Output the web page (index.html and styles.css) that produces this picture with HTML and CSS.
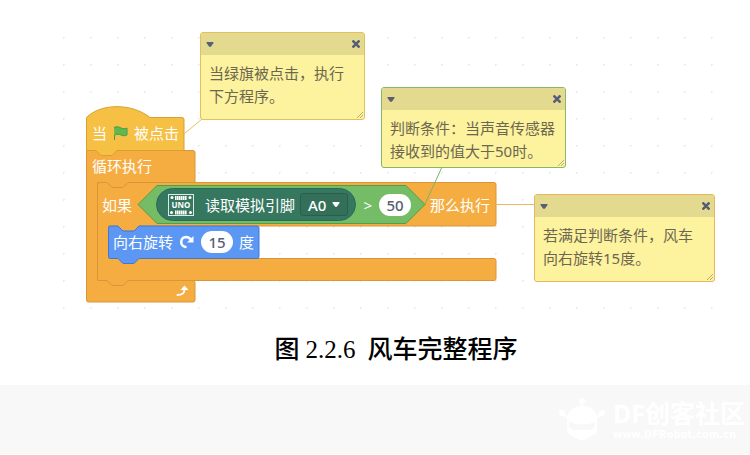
FILE: index.html
```html
<!DOCTYPE html>
<html lang="zh-CN">
<head>
    <meta charset="UTF-8">
    <meta name="viewport" content="width=device-width, initial-scale=1.0">
    <title>风车完整程序</title>
    <link rel="stylesheet" href="styles.css">
</head>
<body>
    <figure class="figure">
        <div class="workspace">
            <!-- Blocs -->
            <div class="script">
                <svg class="shapes" width="412" height="200" viewBox="0 0 412 200" aria-hidden="true">
                    <path fill="#f5ad42" stroke="#d8953a" d="M.5 47.500H107q2 0 2 2V79.500H42l-5 5H26l-5-5H11.500V177.500H107q2 0 2 2V197q0 2-2 2H2.500q-2 0-2-2z"/>
                    <path fill="#f5c043" stroke="#d6a12c" d="M.5 14.500C15 0 46 0 64 14.500H96q2 0 2 2V47.500H31l-5 5H15l-5-5H.5z"/>
                    <path fill="#f5ad42" stroke="#d8953a" d="M11.500 81.500q0-2 2-2H21l5 5H37l5-5H408q2 0 2 2V121q0 2-2 2H53l-5 5H37l-5-5H22.500V155.500H408q2 0 2 2V175.500q0 2-2 2H42l-5 5H26l-5-5H13.500q-2 0-2-2z"/>
                    <path fill="#74bd66" stroke="#549e47" d="M71 82.500H320L339 101.500L320 120.500H71L52 101.500z"/>
                    <path fill="#5b97f3" stroke="#4179d2" d="M22.500 125q0-2 2-2H32l5 5H48l5-5H171q2 0 2 2V153.500q0 2-2 2H53l-5 5H37l-5-5H24.500q-2 0-2-2z"/>
                </svg>
                <div class="row row-hat">
                    <span>当</span>
                    <svg width="15" height="14" viewBox="0 0 15 14" aria-hidden="true">
                        <path fill="#5fb94f" stroke="#4b9a4a" d="M1 1.500C4 0 6 1 8 2s4 1 6 0V9c-2 1-4 1-6 0S4 8 1.500 9V14"/>
                    </svg>
                    <span>被点击</span>
                </div>
                <div class="row row-loop"><span>循环执行</span></div>
                <div class="row row-if">
                    <span>如果</span>
                    <div class="reporter">
                        <svg width="28" height="26" viewBox="0 0 28 26" aria-hidden="true">
                            <rect x="1.500" y="2.500" width="25" height="21" fill="none" stroke="#dcebe6"/>
                            <path stroke="#fff" stroke-width="4" stroke-dasharray="1.600 .4" d="M8 6H20M8 20.500H20"/>
                            <g fill="#fff">
                                <circle cx="5" cy="5.500" r="1.500"/>
                                <circle cx="23" cy="5.500" r="1.500"/>
                                <circle cx="4.500" cy="20.500" r="1.500"/>
                                <circle cx="23.500" cy="20.500" r="1.500"/>
                            </g>
                            <text class="board-name" x="14" y="16" text-anchor="middle">UNO</text>
                        </svg>
                        <span>读取模拟引脚</span>
                        <button class="pin" type="button">A0
                            <svg width="8" height="5" viewBox="0 0 8 5" aria-hidden="true"><path fill="#fff" d="M1 0H7q1 0 .5 1L5 4.500q-1 .8-2 0L.5 1Q0 0 1 0z"/></svg>
                        </button>
                    </div>
                    <span class="operator">&gt;</span>
                    <input class="value" type="text" value="50" aria-label="阈值">
                    <span class="then">那么执行</span>
                </div>
                <div class="row row-turn">
                    <span>向右旋转</span>
                    <svg width="16" height="16" viewBox="0 0 16 16" aria-hidden="true">
                        <path fill="none" stroke="#fff" stroke-width="2.500" stroke-linecap="round" d="M6.500 13C.5 11.500 1 3.500 7 3q2.500 0 4.500 2"/>
                        <path fill="#fff" d="M14.500 2V8.500H8z"/>
                    </svg>
                    <input class="value" type="text" value="15" aria-label="角度">
                    <span>度</span>
                </div>
                <div class="row row-end">
                    <svg width="13" height="12" viewBox="0 0 13 12" aria-hidden="true">
                        <path fill="none" stroke="#fff" stroke-width="2" stroke-linecap="round" d="M1.500 10C6 10 8.500 9 8.500 4"/>
                        <path fill="#fff" d="M4.500 5L8.500 .5L12.500 5z"/>
                    </svg>
                </div>
            </div>

            <!-- Liens entre blocs et commentaires -->
            <svg class="links" width="750" height="320" viewBox="0 0 750 320" fill="none" aria-hidden="true">
                <path stroke="#e3c468" d="M184 134L202 119"/>
                <path stroke="#74b566" d="M425 204L442 167"/>
                <path stroke="#eab765" d="M496 204.500H535"/>
            </svg>

            <!-- Commentaires -->
            <section class="note note-start">
                <header class="note-bar">
                    <button class="note-btn" type="button" aria-label="折叠"><svg width="8" height="5" viewBox="0 0 8 5"><path fill="#575e75" d="M1 0H7q1 0 .5 1L5 4.500q-1 .8-2 0L.5 1Q0 0 1 0z"/></svg></button>
                    <button class="note-btn" type="button" aria-label="关闭"><svg width="8" height="8" viewBox="0 0 8 8"><path stroke="#575e75" stroke-width="2.500" d="M.5 .5L7.500 7.500M7.500 .5L.5 7.500"/></svg></button>
                </header>
                <p class="note-text">当绿旗被点击，执行<br>下方程序。</p>
                <svg class="grip" width="6" height="6" viewBox="0 0 6 6"><path stroke="#b5ae78" d="M0 6L6 0M3 6L6 3"/></svg>
            </section>
            <section class="note note-condition">
                <header class="note-bar">
                    <button class="note-btn" type="button" aria-label="折叠"><svg width="8" height="5" viewBox="0 0 8 5"><path fill="#575e75" d="M1 0H7q1 0 .5 1L5 4.500q-1 .8-2 0L.5 1Q0 0 1 0z"/></svg></button>
                    <button class="note-btn" type="button" aria-label="关闭"><svg width="8" height="8" viewBox="0 0 8 8"><path stroke="#575e75" stroke-width="2.500" d="M.5 .5L7.500 7.500M7.500 .5L.5 7.500"/></svg></button>
                </header>
                <p class="note-text">判断条件：当声音传感器<br>接收到的值大于50时。</p>
                <svg class="grip" width="6" height="6" viewBox="0 0 6 6"><path stroke="#b5ae78" d="M0 6L6 0M3 6L6 3"/></svg>
            </section>
            <section class="note note-turn">
                <header class="note-bar">
                    <button class="note-btn" type="button" aria-label="折叠"><svg width="8" height="5" viewBox="0 0 8 5"><path fill="#575e75" d="M1 0H7q1 0 .5 1L5 4.500q-1 .8-2 0L.5 1Q0 0 1 0z"/></svg></button>
                    <button class="note-btn" type="button" aria-label="关闭"><svg width="8" height="8" viewBox="0 0 8 8"><path stroke="#575e75" stroke-width="2.500" d="M.5 .5L7.500 7.500M7.500 .5L.5 7.500"/></svg></button>
                </header>
                <p class="note-text">若满足判断条件，风车<br>向右旋转15度。</p>
                <svg class="grip" width="6" height="6" viewBox="0 0 6 6"><path stroke="#b5ae78" d="M0 6L6 0M3 6L6 3"/></svg>
            </section>
        </div>
        <figcaption class="caption"><span>图</span><span class="caption-number">2.2.6</span><span>风车完整程序</span></figcaption>
    </figure>

    <footer class="footer">
        <svg width="46" height="44" viewBox="0 0 46 44" aria-hidden="true">
            <path stroke="#fff" stroke-width="2" d="M23 3V12M3 16L11 20M43 16L35 20"/>
            <circle cx="23" cy="3" r="3" fill="#fff"/>
            <circle cx="3" cy="15" r="3" fill="#fff"/>
            <circle cx="43" cy="15" r="3" fill="#fff"/>
            <path fill="#fff" d="M23 8C32 8 37 13 38 20V35L23 43L8 35V20C9 13 14 8 23 8z"/>
            <path fill="#f8f8f8" d="M10 24Q23 29 36 24V29L32 32H14L10 29z"/>
        </svg>
        <div class="brand">
            <span class="brand-name">DF创客社区</span>
            <span class="brand-url">www.DFRobot.com.cn</span>
        </div>
    </footer>
</body>
</html>
```
FILE: styles.css
```css
:root {
    --block-text: #fff;
    --input-text: #575e75;
    --note-color: #fdf29d;
    --note-bar-color: #e3da8f;
    --note-text-color: #6b6750;
}

* {
    box-sizing: border-box;
}

body {
    margin: 0;
    font-family: "Noto Sans", "Noto Sans CJK SC", sans-serif;
    background-color: #fff;
}

svg {
    display: block;
    flex: none;
}

.figure {
    margin: 0;
}

.workspace {
    position: relative;
    height: 320px;
    padding: 24px 24px 0 50px;
    background-image: radial-gradient(circle, #ebebeb 1px, transparent 1px);
    background-size: 27px 27px;
    background-origin: content-box;
    background-clip: content-box;
}

/* Blocs */
.script {
    position: absolute;
    left: 86px;
    top: 103px;
    width: 412px;
    padding-top: 14px;
    color: var(--block-text);
    font-size: 15px;
    line-height: 20px;
}

.shapes,
.links {
    position: absolute;
    left: 0;
    top: 0;
}

.row {
    position: relative;
    display: flex;
    align-items: center;
    white-space: nowrap;
}

.row-hat {
    height: 33px;
    padding: 0 0 2px 6px;
    gap: 6px;
}

.row-loop {
    height: 33px;
    padding: 0 0 2px 6px;
}

.row-if {
    height: 43px;
    padding-left: 16px;
}

.row-turn {
    height: 33px;
    padding: 0 0 2px 27px;
    gap: 6px;
}

.row-end {
    height: 43px;
    padding: 21px 0 0 90px;
}

.reporter {
    display: flex;
    align-items: center;
    height: 33px;
    margin-left: 24px;
    padding: 0 7px 0 10px;
    gap: 10px;
    border: 1px solid #2c6a58;
    border-radius: 17px;
    background: #36775f;
}

.board-name {
    font-size: 8px;
    font-weight: bold;
    fill: #fff;
}

.pin {
    display: flex;
    align-items: center;
    gap: 6px;
    height: 23px;
    margin-left: -5px;
    padding: 0 7px;
    border: 1px solid #2a5f4f;
    border-radius: 3px;
    background: #346f5a;
    color: var(--block-text);
    font: 500 15px "Noto Sans", sans-serif;
}

.operator {
    margin: 0 7px;
}

.value {
    width: 32px;
    height: 22px;
    padding: 0;
    border: 0;
    border-radius: 11px;
    background: #fff;
    color: var(--input-text);
    font: 500 15px "Noto Sans", sans-serif;
    text-align: center;
}

.then {
    margin-left: 19px;
}

/* Commentaires */
.note {
    position: absolute;
    border: 1px solid #e3c05c;
    border-radius: 3px;
    background: var(--note-color);
    color: var(--note-text-color);
    font-size: 15px;
    line-height: 23px;
    overflow: hidden;
}

.note-start {
    left: 200px;
    top: 32px;
    width: 165px;
}

.note-condition {
    left: 381px;
    top: 87px;
    width: 185px;
    border-color: #86b866;
}

.note-turn {
    left: 534px;
    top: 194px;
    width: 181px;
    border-color: #e9b65c;
}

.note-bar {
    display: flex;
    align-items: center;
    justify-content: space-between;
    height: 22px;
    padding: 0 4px 0 5px;
    background: var(--note-bar-color);
}

.note-btn {
    padding: 0;
    border: 0;
    background: none;
}

.note-text {
    margin: 0;
    padding: 7px 8px 11px;
    white-space: nowrap;
}

.note-condition .note-text {
    padding-bottom: 4px;
}

.grip {
    position: absolute;
    right: 1px;
    bottom: 1px;
}

/* Légende */
.caption {
    display: flex;
    align-items: baseline;
    justify-content: center;
    height: 65px;
    padding: 10px 0 0 42px;
    color: #000;
    font-size: 25px;
    font-weight: 500;
    line-height: 36px;
}

.caption-number {
    margin: 0 12px 0 6px;
    font-family: "Liberation Serif", serif;
}

.footer {
    display: flex;
    align-items: center;
    justify-content: flex-end;
    gap: 8px;
    height: 69px;
    padding-right: 5px;
    background: #f8f8f8;
    color: #fff;
}

.brand {
    display: flex;
    flex-direction: column;
    font-weight: bold;
}

.brand-name {
    font-size: 25px;
    line-height: 30px;
}

.brand-url {
    font-family: "DejaVu Sans", sans-serif;
    font-size: 10px;
    line-height: 14px;
}
```
